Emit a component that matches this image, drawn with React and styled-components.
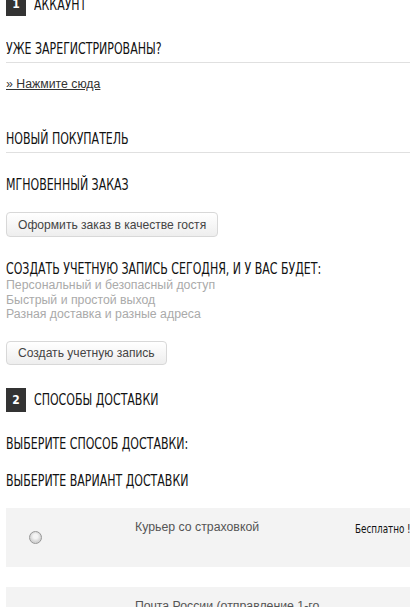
import styled, { createGlobalStyle } from "styled-components";

const GlobalStyle = createGlobalStyle`
  html, body {
    margin: 0;
    padding: 0;
    background: #fff;
    overflow: hidden;
  }
  body {
    font-family: "Liberation Sans", Arial, sans-serif;
    font-size: 12.3px;
    color: #333;
  }
`;

const Page = styled.div`
  display: flex;
  flex-direction: column;
  margin-top: -8px;
  padding-left: 6px;
  width: 404px;
`;

// narrow heading face: DejaVu Sans Condensed squeezed to the width of the original
const Condensed = styled.span`
  display: inline-block;
  white-space: nowrap;
  transform: scaleX(0.815);
  transform-origin: 0 50%;
`;

const Step = styled.div`
  display: flex;
  align-items: center;
  gap: 8px;
  height: 24px;
  margin-top: ${(p) => p.$top || 0}px;
`;

const Badge = styled.span`
  display: flex;
  align-items: center;
  justify-content: center;
  width: 20px;
  height: 24px;
  background: #333;
  color: #fff;
  font-family: "DejaVu Sans Condensed", sans-serif;
  font-weight: bold;
  font-size: 12px;
`;

const StepTitle = styled.span`
  font-family: "DejaVu Sans Condensed", sans-serif;
  font-size: 15px;
  color: #111;
  text-transform: uppercase;
  padding-top: 1px;
`;

const Heading = styled.h4`
  margin: ${(p) => p.$top || 0}px 0 0;
  font-family: "DejaVu Sans Condensed", sans-serif;
  font-weight: normal;
  font-size: 15px;
  line-height: 18px;
  color: #111;
  text-transform: uppercase;
  padding-bottom: ${(p) => (p.$ruled ? 4 : 0)}px;
  border-bottom: ${(p) => (p.$ruled ? "1px solid #e0e0e0" : "none")};
`;

const Link = styled.a`
  display: block;
  margin-top: 13px;
  line-height: 16px;
  color: #333;
  text-decoration: underline;
  cursor: pointer;
`;

const Button = styled.button`
  align-self: flex-start;
  margin-top: ${(p) => p.$top || 0}px;
  padding: 0 11px;
  height: ${(p) => p.$h || 25}px;
  border: 1px solid #d8d8d8;
  border-radius: 4px;
  background: linear-gradient(#ffffff, #eeeeee);
  font-family: "Liberation Sans", Arial, sans-serif;
  font-size: 12.1px;
  color: #444;
  cursor: pointer;
`;

const Perks = styled.ul`
  list-style: none;
  margin: 0;
  padding: 0;
  color: #aaa;
  line-height: 14.5px;
`;

const Option = styled.label`
  display: grid;
  grid-template-columns: 129px 220px 1fr;
  margin-top: ${(p) => p.$top || 0}px;
  height: 59px;
  width: 410px;
  background: #f3f3f3;
`;

const Radio = styled.input.attrs({ type: "radio" })`
  appearance: none;
  align-self: center;
  justify-self: start;
  margin: 1px 0 0 23px;
  width: 13px;
  height: 13px;
  border-radius: 50%;
  border: 1px solid #979797;
  background: radial-gradient(circle at 50% 40%, #f4f4f4 0 25%, #d6d6d6 60%, #cacaca 100%);
  box-sizing: border-box;
`;

const OptionName = styled.span`
  padding-top: 12px;
  line-height: 15px;
  color: #555;
`;

const Price = styled.span`
  padding-top: 14px;
  font-family: "DejaVu Sans Condensed", sans-serif;
  font-size: 12px;
  line-height: 14px;
  color: #111;
`;

export default function App() {
  return (
    <>
      <GlobalStyle />
      <Page>
        <Step>
          <Badge>1</Badge>
          <StepTitle><Condensed>Аккаунт</Condensed></StepTitle>
        </Step>
        <Heading $top={24} $ruled><Condensed>Уже зарегистрированы?</Condensed></Heading>
        <Link>» Нажмите сюда</Link>
        <Heading $top={38} $ruled><Condensed>Новый покупатель</Condensed></Heading>
        <Heading $top={23}><Condensed>Мгновенный заказ</Condensed></Heading>
        <Button $top={18}>Оформить заказ в качестве гостя</Button>
        <Heading $top={23}><Condensed>Создать учетную запись сегодня, и у вас будет:</Condensed></Heading>
        <Perks>
          <li>Персональный и безопасный доступ</li>
          <li>Быстрый и простой выход</li>
          <li>Разная доставка и разные адреса</li>
        </Perks>
        <Button $top={19} $h={24}>Создать учетную запись</Button>
        <Step $top={23}>
          <Badge>2</Badge>
          <StepTitle><Condensed>Способы доставки</Condensed></StepTitle>
        </Step>
        <Heading $top={23}><Condensed>Выберите способ доставки:</Condensed></Heading>
        <Heading $top={19}><Condensed>Выберите вариант доставки</Condensed></Heading>
        <Option $top={18}>
          <Radio name="ship" />
          <OptionName>Курьер со страховкой</OptionName>
          <Price><Condensed>Бесплатно !</Condensed></Price>
        </Option>
        <Option $top={20}>
          <Radio name="ship" />
          <OptionName>Почта России (отправление 1-го класса)</OptionName>
          <Price />
        </Option>
      </Page>
    </>
  );
}
